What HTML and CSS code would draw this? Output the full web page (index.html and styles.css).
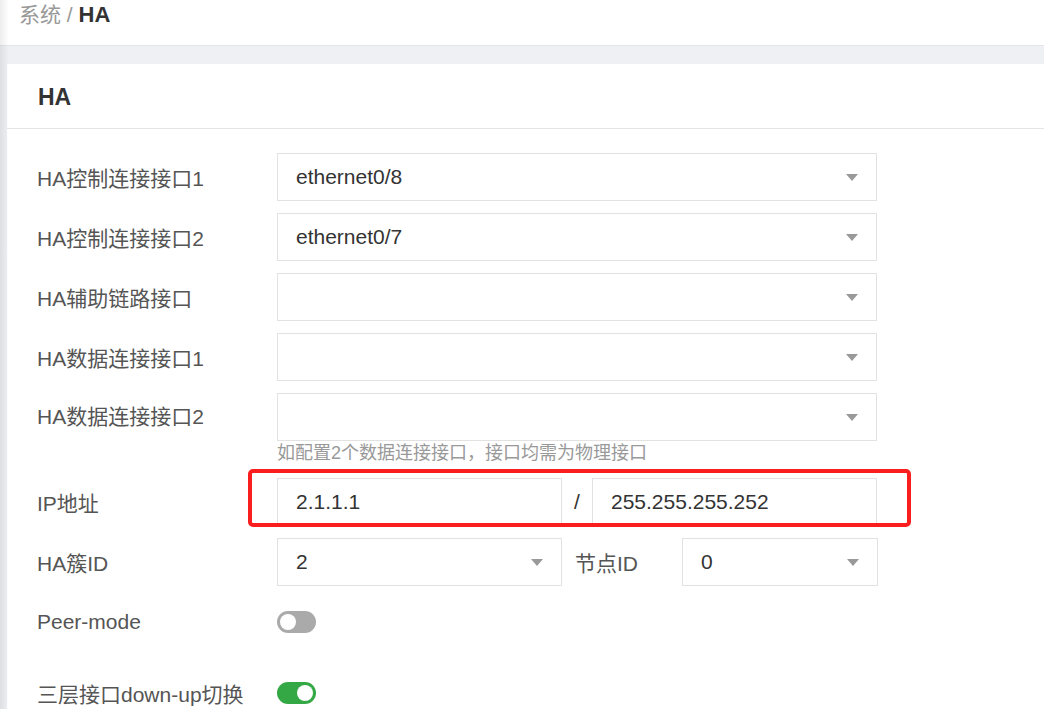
FILE: index.html
```html
<!DOCTYPE html>
<html lang="zh-CN">
<head>
  <meta charset="UTF-8" />
  <title>HA</title>
  <link rel="stylesheet" href="styles.css">
</head>
<body>
  <div class="page">
    <div class="crumbs">
      <span class="crumb-parent">系统 / </span><span class="crumb-current">HA</span>
    </div>

    <div class="main">
      <div class="card">
        <div class="card-title">HA</div>

        <div class="form">
          <div class="row">
            <label>HA控制连接接口1</label>
            <div class="select wide"><span>ethernet0/8</span><i class="caret"></i></div>
          </div>
          <div class="row">
            <label>HA控制连接接口2</label>
            <div class="select wide"><span>ethernet0/7</span><i class="caret"></i></div>
          </div>
          <div class="row">
            <label>HA辅助链路接口</label>
            <div class="select wide"><span></span><i class="caret"></i></div>
          </div>
          <div class="row">
            <label>HA数据连接接口1</label>
            <div class="select wide"><span></span><i class="caret"></i></div>
          </div>
          <div class="row has-help">
            <label>HA数据连接接口2</label>
            <div class="field">
              <div class="select wide"><span></span><i class="caret"></i></div>
              <div class="help">如配置2个数据连接接口，接口均需为物理接口</div>
            </div>
          </div>

          <div class="row ip-row">
            <label>IP地址</label>
            <div class="input half">2.1.1.1</div>
            <span class="sep">/</span>
            <div class="input half">255.255.255.252</div>
            <div class="mark"></div>
          </div>

          <div class="row">
            <label>HA簇ID</label>
            <div class="select half"><span>2</span><i class="caret"></i></div>
            <span class="inline-label">节点ID</span>
            <div class="select small"><span>0</span><i class="caret"></i></div>
          </div>

          <div class="row switch-row">
            <label>Peer-mode</label>
            <span class="switch"></span>
          </div>
          <div class="row switch-row last">
            <label>三层接口down-up切换</label>
            <span class="switch on"></span>
          </div>
        </div>
      </div>
    </div>
  </div>
</body>
</html>
```

FILE: styles.css
```css
html, body {
  margin: 0;
  height: 100%;
  overflow: hidden;
}
body {
  font-family: "Liberation Sans", "Noto Sans CJK SC", sans-serif;
  color: #333;
  background: #eff0f4;
}
.page {
  position: relative;
  min-height: 100%;
}
/* sidebar shadow on the left edge */
.page::before {
  content: "";
  position: absolute;
  left: 0;
  top: 0;
  bottom: 0;
  width: 9px;
  background: linear-gradient(to right, rgba(0, 0, 0, 0.07), rgba(0, 0, 0, 0));
  pointer-events: none;
  z-index: 2;
}
.crumbs {
  background: #fff;
  height: 45px;
  border-bottom: 1px solid #e3e5e9;
  padding-left: 19px;
  font-size: 21px;
  line-height: 29px;
}
.crumb-parent {
  color: #999;
}
.crumb-current {
  font-weight: bold;
  font-size: 22px;
  color: #333;
}
.main {
  padding: 18px 0 0 7px;
}
.card {
  background: #fff;
  min-height: 700px;
}
.card-title {
  height: 64px;
  line-height: 66px;
  padding-left: 31px;
  font-size: 23px;
  font-weight: bold;
  color: #333;
  border-bottom: 1px solid #e5e5e5;
}
.form {
  padding: 24px 0 0 30px;
}
.row {
  position: relative;
  display: flex;
  align-items: center;
  margin-bottom: 12px;
  font-size: 21px;
}
.row > label {
  width: 240px;
  flex-shrink: 0;
  color: #555;
}
.row.has-help {
  align-items: flex-start;
}
.row.has-help > label {
  line-height: 48px;
}
.help {
  font-size: 18px;
  line-height: 25px;
  color: #999;
}
.select, .input {
  box-sizing: border-box;
  height: 48px;
  border: 1px solid #e2e2e2;
  display: flex;
  align-items: center;
  padding: 0 18px;
  color: #333;
}
.select span {
  flex: 1;
}
.wide {
  width: 600px;
}
.half {
  width: 285px;
}
.small {
  width: 196px;
}
.caret {
  width: 0;
  height: 0;
  border-left: 6px solid transparent;
  border-right: 6px solid transparent;
  border-top: 7px solid #999;
  margin-top: 1px;
}
.sep {
  width: 30px;
  text-align: center;
  color: #333;
}
.inline-label {
  width: 120px;
  padding-left: 13px;
  box-sizing: border-box;
  color: #555;
}
/* red annotation box around the ip row */
.mark {
  position: absolute;
  left: 211px;
  top: -9px;
  width: 663px;
  height: 58px;
  box-sizing: border-box;
  border: 4px solid #fa1e1e;
  border-radius: 5px;
}
.switch-row {
  height: 48px;
}
.switch-row.last {
  margin-top: 23px;
}
.switch {
  position: relative;
  width: 39px;
  height: 22px;
  border-radius: 11px;
  background: #aaa;
}
.switch::after {
  content: "";
  position: absolute;
  top: 3px;
  left: 3px;
  width: 16px;
  height: 16px;
  border-radius: 50%;
  background: #fff;
}
.switch.on {
  background: #35a846;
}
.switch.on::after {
  left: 20px;
}
```
